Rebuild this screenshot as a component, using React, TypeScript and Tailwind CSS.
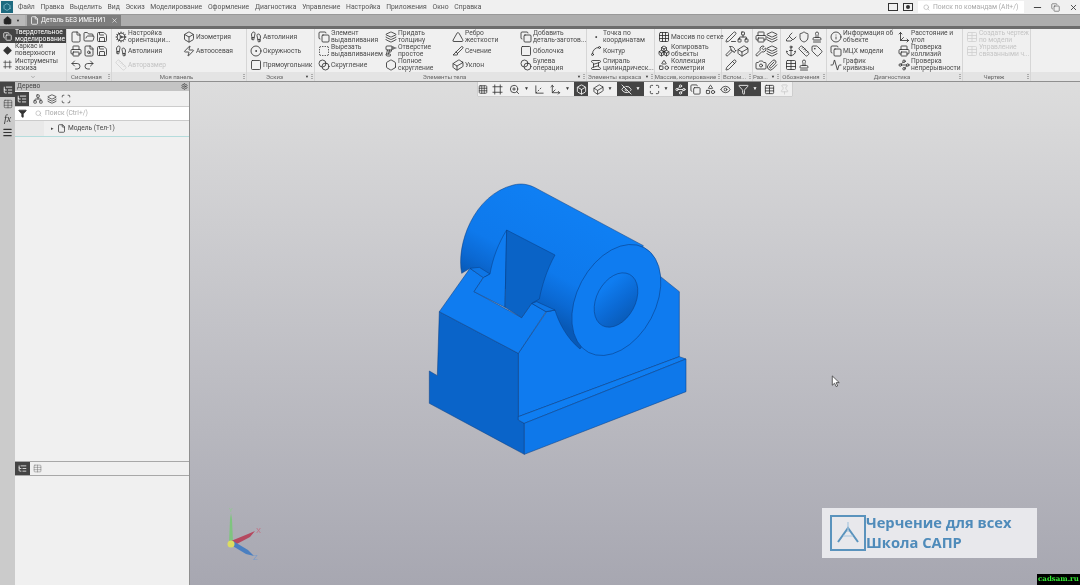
import React from "react";
import {
  Box, Cog, File, FolderOpen, Save, Printer, FileSearch, Undo2, Redo2, Footprints, Zap, Ruler, Square,
  Copy, SquareDashed, Layers, Blend, Triangle, Slice, Hexagon, Dot, Spline, Grid3x3, Boxes, Shapes, Wrench,
  PenLine, Waypoints, Cuboid, Scan, Search, ChevronDown, Home, X, Minus, Filter, Settings, ListTree, Table,
  Menu, Network, Eye, EyeOff, Maximize, ZoomIn, Axis3d, Frame, Camera, Pin, Activity, Info, Spool, Move3d, Stamp, Anchor, Highlighter, Tag, Paperclip, Shield, Pencil, Drill, Hammer, Diamond, CircleDot,
} from "lucide-react";

const FONT = "font-['Roboto','Noto_Sans',sans-serif]";
type I = React.ComponentType<{ size?: number; strokeWidth?: number; className?: string; fill?: string }>;

function Tool({ icon: Ic, lines, faded }: { icon: I; lines: string[]; faded?: boolean }) {
  return (
    <div className={`flex h-[14px] items-center gap-[1px] ${faded ? "text-[#c4c4c4]" : "text-[#4a4a4a]"}`}>
      <Ic size={12} strokeWidth={1.6} className={`shrink-0 ${faded ? "text-[#cfcfcf]" : "text-[#2a2a2a]"}`} />
      <div className="whitespace-nowrap text-[6.7px] leading-[7px]">
        {lines.map((l) => (
          <div key={l}>{l}</div>
        ))}
      </div>
    </div>
  );
}

function Group({ label, w, arrow, children }: { label: string; w: string; arrow?: boolean; children: React.ReactNode }) {
  return (
    <div className={`flex shrink-0 flex-col border-r border-[#d6d6d6] ${w}`}>
      <div className="flex h-[43px] gap-[4px] px-[3px] pt-[1px]">{children}</div>
      <div className={`relative flex h-[9px] items-center justify-center overflow-hidden bg-[#e4e4e4] text-[6px] whitespace-nowrap text-[#666] ${arrow ? "pr-[12px]" : "pr-[5px]"}`}>
        {label}
        {arrow && <span className="absolute right-[5px] text-[4px] text-[#333]">▼</span>}
        <span className="absolute right-[1px] h-[5px] w-[2px] border-x border-dotted border-[#aaa]" />
      </div>
    </div>
  );
}

function Col({ w, children }: { w: string; children: React.ReactNode }) {
  return <div className={`flex shrink-0 flex-col ${w}`}>{children}</div>;
}

function IconGrid({ icons, cols }: { icons: I[]; cols: string }) {
  return (
    <div className={`grid auto-rows-[14px] items-center justify-items-center ${cols}`}>
      {icons.map((Ic, i) => (
        <Ic key={i} size={12} strokeWidth={1.6} className="text-[#2a2a2a]" />
      ))}
    </div>
  );
}

function TBtn({ icon: Ic, dark, arrow, w, faded }: { icon: I; dark?: boolean; arrow?: boolean; w: string; faded?: boolean }) {
  return (
    <div className={`flex h-[14px] items-center justify-center gap-[4px] ${w} ${dark ? "bg-[#444] text-white" : faded ? "text-[#ccc]" : "text-[#333]"}`}>
      <Ic size={11} strokeWidth={1.8} />
      {arrow && <span className="text-[5px]">▼</span>}
    </div>
  );
}

function Model() {
  const line = { stroke: "#0a3f85", strokeWidth: 1.6, strokeLinejoin: "round" as const };
  return (
    <svg viewBox="0 0 840 855" width={280} height={285} className="absolute top-[93px] left-[230px]">
      <defs>
        <linearGradient id="cyl" gradientUnits="userSpaceOnUse" x1="56" y1="-106" x2="-94" y2="176">
          <stop offset="0" stopColor="#0f7ff3" />
          <stop offset="0.6" stopColor="#0e79ec" />
          <stop offset="0.82" stopColor="#0b69d3" />
          <stop offset="1" stopColor="#0859b6" />
        </linearGradient>
        <linearGradient id="hole" gradientUnits="userSpaceOnUse" x1="625" y1="300" x2="575" y2="425">
          <stop offset="0" stopColor="#0957b0" />
          <stop offset="0.5" stopColor="#0b69d3" />
          <stop offset="1" stopColor="#0f7df1" />
        </linearGradient>
      </defs>
      <polygon points="295,535 380,410 405,405 722,305 778,350 778,545 295,725" fill="#0f7bef" {...line} />
      <path d="M125,295 C108,210 160,60 280,30 C305,24 325,28 345,38 L670,212 L589,375 L480,522 C440,490 415,440 405,405 L378,410 L150,280 Z" fill="url(#cyl)" {...line} />
      <polygon points="58,410 295,535 295,735 313,745 313,838 28,685 28,588 52,602" fill="#0a64c9" {...line} />
      <polygon points="295,725 778,545 798,552 313,745 295,735" fill="#0f7ef2" {...line} />
      <polygon points="313,745 798,552 798,650 313,838" fill="#0e78ea" {...line} />
      <polygon points="58,410 150,280 190,308 162,350 305,428 335,385 378,410 295,535" fill="#0f7cf0" {...line} />
      <polygon points="150,280 178,277 210,297 190,308" fill="#0e76e6" {...line} />
      <polygon points="335,385 350,380 405,405 378,410" fill="#0e76e6" {...line} />
      <path d="M260,165 C235,205 218,250 210,297 L190,308 L162,350 L255,397 Z" fill="#0f7cf0" {...line} />
      <path d="M260,165 L405,240 C380,285 365,335 358,372 L335,385 L305,428 L255,397 Z" fill="#0a63c6" {...line} />
      <ellipse cx="589" cy="375" rx="178" ry="118" transform="rotate(118 589 375)" fill="#0f7cf0" {...line} />
      <ellipse cx="588" cy="375" rx="87" ry="58" transform="rotate(118 588 375)" fill="url(#hole)" {...line} />
    </svg>
  );
}

function Triad() {
  return (
    <svg viewBox="0 0 50 60" width={50} height={60} className="absolute top-[425px] left-[28px]">
      <path d="M11,36 L12,12 L13,6 L14,12 L15,36 Z" fill="#7fc47f" />
      <path d="M13,34 L30,27 L37,24 L32,30 L15,39 Z" fill="#b5485f" />
      <path d="M13,38 L15,34 L30,43 L36,49 L28,47 Z" fill="#4a7fc0" />
      <circle cx="13" cy="37" r="3.5" fill="#dcdc60" />
      <text x="11" y="5" fontSize="6" fill="#8fc98f">Y</text>
      <text x="38" y="26" fontSize="8" fill="#c07488">X</text>
      <text x="35" y="53" fontSize="8" fill="#7b9bc9">Z</text>
    </svg>
  );
}

export default function App() {
  return (
    <div className={`flex h-[585px] w-[1080px] flex-col overflow-hidden bg-[#efefef] ${FONT} blur-[0.25px]`}>
      {/* menu */}
      <div className="flex h-[14px] shrink-0 items-center bg-[#f0f0f0] text-[6.8px] text-[#555]">
        <div className="mx-[1px] flex h-[12px] w-[12px] items-center justify-center bg-[#1e6a7f]">
          <Hexagon size={8} className="text-[#9fd3e3]" />
        </div>
        <div className="ml-[4px] flex gap-[5.7px] whitespace-nowrap">
          {["Файл", "Правка", "Выделить", "Вид", "Эскиз", "Моделирование", "Оформление", "Диагностика", "Управление", "Настройка", "Приложения", "Окно", "Справка"].map((m) => (
            <span key={m}>{m}</span>
          ))}
        </div>
        <div className="ml-auto flex items-center">
          <span className="h-[8px] w-[10px] border border-[#333]" />
          <span className="ml-[5px] flex h-[8px] w-[10px] items-center justify-center border border-[#333]">
            <span className="h-[4px] w-[4px] rounded-full bg-[#333]" />
          </span>
          <div className="ml-[5px] flex h-[12px] w-[106px] items-center gap-[3px] bg-white pl-[5px] whitespace-nowrap text-[#aaa]">
            <Search size={7} /> Поиск по командам (Alt+/)
          </div>
          <Minus size={11} strokeWidth={2} className="ml-[8px] text-[#333]" />
          <Copy size={9} strokeWidth={1.4} className="ml-[8px] text-[#333]" />
          <X size={9} strokeWidth={2.2} className="mr-[2px] ml-[9px] text-[#333]" />
        </div>
      </div>
      {/* tabs */}
      <div className="flex h-[12px] shrink-0 items-center gap-[2px] border-t border-[#999] bg-[#adadad]">
        <div className="flex h-full w-[25px] items-center gap-[4px] bg-[#b9b9b9] pl-[3px]">
          <Home size={9} fill="#222" strokeWidth={2} className="text-[#222]" />
          <span className="text-[4px] text-[#222]">▼</span>
        </div>
        <div className="flex h-full w-[94px] items-center gap-[2px] bg-[#7e7e7e] pl-[3px] text-[6.6px] whitespace-nowrap text-white">
          <File size={9} strokeWidth={2} /> Деталь БЕЗ ИМЕНИ1
          <X size={7} className="mr-[3px] ml-auto" />
        </div>
      </div>
      <div className="h-[3px] shrink-0 bg-[#6c6c6c]" />
      {/* ribbon */}
      <div className="flex h-[52px] shrink-0 bg-[#f0f0f0]">
        <div className="flex w-[67px] shrink-0 flex-col border-r border-[#d6d6d6] text-[6.7px] leading-[7px]">
          <div className="flex h-[14px] items-center gap-[3px] bg-[#444] pl-[3px] text-white">
            <Copy size={9} className="shrink-0" />
            <div>Твердотельное<br />моделирование</div>
          </div>
          <div className="flex h-[14px] items-center gap-[3px] pl-[3px] text-[#444]">
            <Diamond size={9} fill="#333" className="shrink-0" />
            <div>Каркас и<br />поверхности</div>
          </div>
          <div className="flex h-[15px] items-center gap-[3px] pl-[3px] text-[#444]">
            <Frame size={9} className="shrink-0" />
            <div>Инструменты<br />эскиза</div>
          </div>
          <div className="flex h-[9px] items-center justify-center bg-[#e4e4e4] text-[#777]">
            <ChevronDown size={6} />
          </div>
        </div>
        <Group label="Системная" w="w-[45px]">
          <IconGrid cols="grid-cols-3 w-[39px]" icons={[File, FolderOpen, Save, Printer, FileSearch, Save, Undo2, Redo2]} />
        </Group>
        <Group label="Моя панель" w="w-[135px]">
          <Col w="w-[64px]">
            <Tool icon={Cog} lines={["Настройка", "ориентации..."]} />
            <Tool icon={Footprints} lines={["Автолиния"]} />
            <Tool icon={Ruler} lines={["Авторазмер"]} faded />
          </Col>
          <Col w="w-[60px]">
            <Tool icon={Box} lines={["Изометрия"]} />
            <Tool icon={Zap} lines={["Автоосевая"]} />
          </Col>
        </Group>
        <Group label="Эскиз" w="w-[68px]" arrow>
          <Col w="w-[60px]">
            <Tool icon={Footprints} lines={["Автолиния"]} />
            <Tool icon={CircleDot} lines={["Окружность"]} />
            <Tool icon={Square} lines={["Прямоугольник"]} />
          </Col>
        </Group>
        <Group label="Элементы тела" w="w-[272px]" arrow>
          <Col w="w-[63px]">
            <Tool icon={Copy} lines={["Элемент", "выдавливания"]} />
            <Tool icon={SquareDashed} lines={["Вырезать", "выдавливанием"]} />
            <Tool icon={Blend} lines={["Скругление"]} />
          </Col>
          <Col w="w-[63px]">
            <Tool icon={Layers} lines={["Придать", "толщину"]} />
            <Tool icon={Drill} lines={["Отверстие", "простое"]} />
            <Tool icon={Hexagon} lines={["Полное", "скругление"]} />
          </Col>
          <Col w="w-[64px]">
            <Tool icon={Triangle} lines={["Ребро", "жесткости"]} />
            <Tool icon={Slice} lines={["Сечение"]} />
            <Tool icon={Cuboid} lines={["Уклон"]} />
          </Col>
          <Col w="w-[64px]">
            <Tool icon={Copy} lines={["Добавить", "деталь-заготов..."]} />
            <Tool icon={Square} lines={["Оболочка"]} />
            <Tool icon={Blend} lines={["Булева", "операция"]} />
          </Col>
        </Group>
        <Group label="Элементы каркаса" w="w-[68px]" arrow>
          <Col w="w-[60px]">
            <Tool icon={Dot} lines={["Точка по", "координатам"]} />
            <Tool icon={Spline} lines={["Контур"]} />
            <Tool icon={Spool} lines={["Спираль", "цилиндрическ..."]} />
          </Col>
        </Group>
        <Group label="Массив, копирование" w="w-[67px]">
          <Col w="w-[60px]">
            <Tool icon={Grid3x3} lines={["Массив по сетке"]} />
            <Tool icon={Boxes} lines={["Копировать", "объекты"]} />
            <Tool icon={Shapes} lines={["Коллекция", "геометрии"]} />
          </Col>
        </Group>
        <Group label="Вспом..." w="w-[31px]">
          <IconGrid cols="grid-cols-2 w-[25px]" icons={[PenLine, Network, Hammer, Cuboid, Pencil]} />
        </Group>
        <Group label="Раз..." w="w-[28px]" arrow>
          <IconGrid cols="grid-cols-2 w-[22px]" icons={[Printer, Layers, Wrench, Layers, Camera, Paperclip]} />
        </Group>
        <Group label="Обозначения" w="w-[46px]">
          <IconGrid cols="grid-cols-3 w-[39px]" icons={[Highlighter, Shield, Stamp, Anchor, Ruler, Tag, Table, Stamp]} />
        </Group>
        <Group label="Диагностика" w="w-[136px]">
          <Col w="w-[64px]">
            <Tool icon={Info} lines={["Информация об", "объекте"]} />
            <Tool icon={Copy} lines={["МЦХ модели"]} />
            <Tool icon={Activity} lines={["График", "кривизны"]} />
          </Col>
          <Col w="w-[60px]">
            <Tool icon={Move3d} lines={["Расстояние и", "угол"]} />
            <Tool icon={Printer} lines={["Проверка", "коллизий"]} />
            <Tool icon={Waypoints} lines={["Проверка", "непрерывности"]} />
          </Col>
        </Group>
        <Group label="Чертеж" w="w-[68px]">
          <Col w="w-[60px]">
            <Tool icon={Table} lines={["Создать чертеж", "по модели"]} faded />
            <Tool icon={Table} lines={["Управление", "связанными ч..."]} faded />
          </Col>
        </Group>
        <div className="flex flex-1 flex-col">
          <div className="h-[43px]" />
          <div className="h-[9px] bg-[#e4e4e4]" />
        </div>
      </div>
      <div className="h-[1px] shrink-0 bg-[#8f8f8f]" />
      {/* main */}
      <div className="flex min-h-0 flex-1">
        <div className="flex w-[15px] shrink-0 flex-col items-center bg-[#cbcbcb] text-[#333]">
          <div className="flex h-[15px] w-full items-center justify-center bg-[#444] text-white"><ListTree size={10} /></div>
          <div className="flex h-[14px] items-center"><Table size={10} strokeWidth={1.2} /></div>
          <div className="flex h-[14px] items-center font-['Liberation_Serif',serif] text-[10px] italic">fx</div>
          <div className="flex h-[14px] items-center"><Menu size={11} strokeWidth={2.6} /></div>
        </div>
        <div className="flex w-[175px] shrink-0 flex-col border-r border-[#8f8f8f] bg-[#f0f0f0]">
          <div className="flex h-[9px] items-center justify-between bg-[#c4c4c4] pr-[1px] pl-[2px] text-[6.6px] text-[#444]">
            Дерево <Settings size={7} strokeWidth={2.4} />
          </div>
          <div className="flex h-[15px] items-center gap-[4px] text-[#444]">
            <div className="flex h-[14px] w-[14px] items-center justify-center bg-[#444] text-white"><ListTree size={10} /></div>
            <Network size={10} />
            <Layers size={10} />
            <Scan size={10} />
          </div>
          <div className="flex h-[15px] items-center border-y border-[#ccc] bg-white pl-[3px] text-[6.7px] text-[#aaa]">
            <Filter size={9} fill="#333" className="text-[#333]" />
            <Search size={7} className="ml-[8px]" />
            <span className="ml-[3px]">Поиск (Ctrl+/)</span>
          </div>
          <div className="flex h-[16px] items-center border-b border-[#b4dcdc] text-[6.6px] text-[#444]">
            <div className="h-full w-[29px] bg-[#e9e9e9]" />
            <span className="ml-[7px] text-[5px]">▸</span>
            <File size={9} strokeWidth={2} className="ml-[3px] text-[#333]" />
            <span className="ml-[2px]">Модель (Тел-1)</span>
          </div>
          <div className="flex-1" />
          <div className="flex h-[15px] items-center border-y border-[#a8a8a8]">
            <div className="flex h-full w-[15px] items-center justify-center bg-[#444] text-white"><ListTree size={9} /></div>
            <Table size={9} strokeWidth={1.2} className="ml-[3px] text-[#666]" />
          </div>
          <div className="h-[109px] shrink-0" />
        </div>
        {/* canvas */}
        <div className="relative flex-1 bg-gradient-to-b from-[#dddddd] to-[#a7a7b1]">
          <div className="flex justify-center">
            <div className="flex h-[14px] w-[314px] items-center bg-[#f0f0f0] shadow-[0_0_1px_#888]">
              <TBtn icon={Grid3x3} w="w-[10px]" />
              <TBtn icon={Frame} w="w-[18px]" />
              <TBtn icon={ZoomIn} arrow w="w-[26px]" />
              <TBtn icon={Axis3d} w="w-[14px]" />
              <TBtn icon={Move3d} arrow w="w-[28px]" />
              <TBtn icon={Box} dark w="w-[14px]" />
              <TBtn icon={Cuboid} arrow w="w-[29px]" />
              <TBtn icon={EyeOff} dark arrow w="w-[27px]" />
              <TBtn icon={Maximize} arrow w="w-[29px]" />
              <TBtn icon={Waypoints} dark w="w-[15px]" />
              <TBtn icon={Copy} w="w-[15px]" />
              <TBtn icon={Shapes} w="w-[14px]" />
              <TBtn icon={Eye} w="w-[17px]" />
              <TBtn icon={Filter} dark arrow w="w-[27px]" />
              <TBtn icon={Table} w="w-[16px]" />
              <TBtn icon={Pin} faded w="w-[15px]" />
            </div>
          </div>
          <Model />
          <Triad />
          <svg viewBox="0 0 10 14" width={10} height={13} className="absolute top-[293px] left-[641px]">
            <path d="M1,1 L1,11 L3.5,8.8 L5.2,12.5 L6.8,11.8 L5.2,8.2 L8.5,8.2 Z" fill="#fff" stroke="#333" strokeWidth="0.8" />
          </svg>
          <div className="absolute top-[426px] left-[632px] flex h-[50px] w-[215px] items-center bg-[#e8e8ec] pl-[8px]">
            <svg viewBox="0 0 36 36" width={36} height={36} className="shrink-0">
              <rect x="1" y="1" width="34" height="34" fill="none" stroke="#5a93bd" strokeWidth="2" />
              <path d="M8,27 L18,13 L28,27" fill="none" stroke="#5a93bd" strokeWidth="2" />
              <path d="M18,7 L18,17 M13,21 L23,21" stroke="#a8c6de" strokeWidth="1.2" />
            </svg>
            <div className="mt-[-3px] font-['Open_Sans',sans-serif] text-[14.7px] leading-[20px] font-bold whitespace-nowrap text-[#4f8bba]">
              <div>Черчение для всех</div>
              <div>Школа САПР</div>
            </div>
          </div>
          <div className="absolute right-0 bottom-0 flex h-[11px] w-[43px] items-center justify-center bg-black font-['DejaVu_Serif',serif] text-[7px] font-bold text-[#35e835]">
            cadsam.ru
          </div>
        </div>
      </div>
    </div>
  );
}
